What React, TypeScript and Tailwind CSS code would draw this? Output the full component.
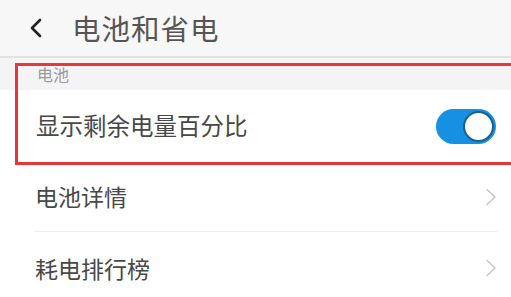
import React from "react";

const font = { fontFamily: '"Noto Sans CJK SC", "Noto Sans", sans-serif' };

function Chevron() {
  return (
    <svg width="12" height="18" viewBox="0 0 12 18" fill="none">
      <path d="M2 1.5 L10 9 L2 16.5" stroke="#c4c4c4" strokeWidth="1.4" strokeLinecap="round" strokeLinejoin="round" />
    </svg>
  );
}

function Toggle() {
  return (
    <div className="relative w-[60px] h-[35px] rounded-full bg-[#1590e3]">
      <div className="absolute right-[2px] top-[2px] w-[31px] h-[31px] rounded-full bg-white border-[2px] border-[#1a5f8f]" />
    </div>
  );
}

export default function App() {
  return (
    <div className="relative w-[511px] h-[297px] overflow-hidden bg-white text-[#484848]" style={font}>
      <div className="h-[58px] bg-[#f7f7f7] flex items-center border-b-[2px] border-[#e2e2e2]">
        <svg className="ml-[29px]" width="14" height="20" viewBox="0 0 14 20" fill="none">
          <path d="M11 2 L3 10 L11 18" stroke="#222" strokeWidth="2.6" strokeLinecap="round" strokeLinejoin="round" />
        </svg>
        <div className="ml-[29px] text-[28.5px] leading-none text-[#555] tracking-[1px]">电池和省电</div>
      </div>
      <div className="h-[32px] bg-[#f4f4f6] flex items-center pl-[37px] text-[16px] text-[#9a9a9a]">电池</div>
      <div className="h-[72px] flex items-center pl-[36px] pr-[15px] justify-between">
        <div className="text-[23.5px] leading-none">显示剩余电量百分比</div>
        <Toggle />
      </div>
      <div className="h-[70px] ml-[35px] mr-[14px] flex items-center justify-between border-b border-[#ececec]">
        <div className="text-[23px] leading-none">电池详情</div>
        <Chevron />
      </div>
      <div className="h-[72px] ml-[35px] mr-[14px] flex items-center justify-between">
        <div className="text-[23px] leading-none">耗电排行榜</div>
        <Chevron />
      </div>
      <div className="absolute left-[15px] top-[63px] w-[520px] h-[102px] border-[3px] border-[#e8353a]" />
    </div>
  );
}
